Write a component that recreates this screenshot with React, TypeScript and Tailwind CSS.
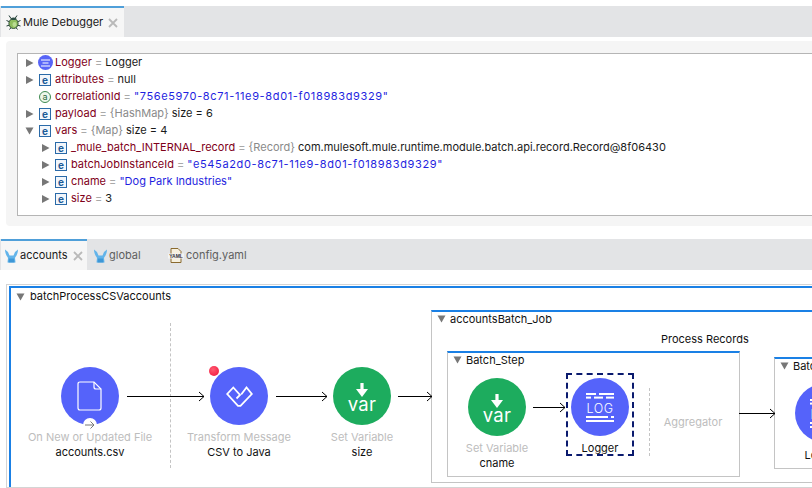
import React from "react";

const font = "font-['Inter','Liberation_Sans',sans-serif]";

function Tri({ open }: { open?: boolean }) {
  return (
    <svg width="9" height="10" viewBox="0 0 9 10" className="shrink-0">
      {open ? <path d="M0.5 1.5H8.5L4.5 8.5Z" fill="#777" /> : <path d="M1 1L8.5 5L1 9Z" fill="#777" />}
    </svg>
  );
}

function E() {
  return (
    <span className="flex h-[12px] w-[12px] shrink-0 items-center justify-center border border-[#2a6aa8] bg-[#f2f6fb] text-[10px] font-bold leading-none text-[#1c5a96]">
      e
    </span>
  );
}

function Row({ indent, tri, icon, name, children }: { indent: number; tri?: "open" | "closed"; icon: React.ReactNode; name: string; children: React.ReactNode }) {
  return (
    <div className="flex h-[17px] items-center" style={{ paddingLeft: indent }}>
      <span className="flex w-[12px] shrink-0 items-center">{tri && <Tri open={tri === "open"} />}</span>
      <span className="flex w-[16px] shrink-0 items-center justify-center">{icon}</span>
      <span className="ml-[2px] whitespace-pre text-[#7f0019]">{name}</span>
      <span className="whitespace-pre text-[#a9a9a9]"> = </span>
      {children}
    </div>
  );
}

const Blue = ({ children }: { children: React.ReactNode }) => <span className="whitespace-pre text-[#1f1fe0]">{children}</span>;
const Uuid = ({ children }: { children: React.ReactNode }) => <span className="whitespace-pre tracking-[0.64px] text-[#1f1fe0]">{children}</span>;
const Gray = ({ children }: { children: React.ReactNode }) => <span className="whitespace-pre text-[#8a8a8a]">{children}</span>;
const Dark = ({ children }: { children: React.ReactNode }) => <span className="whitespace-pre text-[#1a1a1a]">{children}</span>;

function Close() {
  return (
    <svg width="10" height="10" viewBox="0 0 10 10" className="ml-[5px] shrink-0">
      <path d="M1 1L9 9M9 1L1 9" stroke="#b9b9b9" strokeWidth="1.8" />
    </svg>
  );
}

function Bug() {
  return (
    <svg width="15" height="15" viewBox="0 0 15 15" className="shrink-0">
      <path d="M3 0.5L5 3.5M11 0.5L9 3.5M0.5 5.5L4 7M14.5 5.5L11 7M0.5 11L4 10M14.5 11L11 10M3.5 14.5L5.5 12M11.5 14.5L9.5 12" stroke="#1f3a34" strokeWidth="1" />
      <ellipse cx="7.5" cy="8.5" rx="4.6" ry="5" fill="#8fbe5e" stroke="#34543c" strokeWidth="1" />
      <ellipse cx="8.5" cy="9.5" rx="2" ry="2.4" fill="#b9dc92" />
      <path d="M4.5 3.5Q7.5 1.5 10.5 3.5L9.5 5H5.5Z" fill="#2f4f45" />
    </svg>
  );
}

function Mule() {
  return (
    <svg width="13" height="14" viewBox="0 0 13 14" className="shrink-0">
      <path d="M0 0.5C0 5 2 7 3 9L2.5 13.5H10.5L10 9C11 7 13 5 13 0.5L10 3L8.5 6.5H4.5L3 3Z" fill="#62b4ea" />
      <path d="M4 9.5H9L9.5 13.5H3.5Z" fill="#3f97d6" />
    </svg>
  );
}

function Tab({ active, w, pl, icon, label, close }: { active?: boolean; w: string; pl: string; icon: React.ReactNode; label: string; close?: boolean }) {
  return (
    <div className={`${w} ${pl} flex h-full items-center ${active ? "border-t-2 border-[#4f9fd9] bg-[#f6f6f6] text-[#1a1a1a]" : "pt-[2px] text-[#5f5f5f]"} text-[11px]`}>
      {icon}
      <span className="ml-[2px] whitespace-pre">{label}</span>
      {close && <Close />}
    </div>
  );
}

function Node({ x, y, color, children }: { x: number; y: number; color: string; children: React.ReactNode }) {
  return (
    <div className="absolute flex h-[58px] w-[58px] items-center justify-center rounded-full" style={{ left: x - 29, top: y - 29, backgroundColor: color }}>
      {children}
    </div>
  );
}

function Label({ x, y, muted, children }: { x: number; y: number; muted?: boolean; children: React.ReactNode }) {
  return (
    <div className={`absolute -translate-x-1/2 whitespace-nowrap text-[11px] leading-[14px] ${muted ? "text-[#bdbdbd]" : "text-[#111]"}`} style={{ left: x, top: y - 7 }}>
      {children}
    </div>
  );
}

function Box({ x, y, w, h, title }: { x: number; y: number; w: number; h: number; title: string }) {
  return (
    <div className="absolute border border-t-2 border-[#c4c4c4] border-t-[#1a80e5] bg-white" style={{ left: x, top: y, width: w, height: h }}>
      <div className="flex h-[14px] items-center pl-[5px] text-[11px] leading-[14px] text-[#111]">
        <svg width="9" height="8" viewBox="0 0 9 8" className="mr-[4px] shrink-0">
          <path d="M0.5 0.5H8.5L4.5 7.5Z" fill="#777" />
        </svg>
        {title}
      </div>
    </div>
  );
}

function VarIcon() {
  return (
    <svg width="40" height="46" viewBox="0 0 40 46" className="mt-[1px]">
      <path d="M18.4 9H21.6V15H26L20 23L14 15H18.4Z" fill="#fff" />
      <text x="20" y="37" textAnchor="middle" fill="#fff" fontSize="18.5" fontWeight="400" letterSpacing=".3" fontFamily="Inter, sans-serif">var</text>
    </svg>
  );
}

function LogIcon() {
  return (
    <svg width="28" height="29" viewBox="0 0 28 29" fill="#fff">
      <rect x="0" y="0" width="10" height="2" /><rect x="13" y="0" width="15" height="2" />
      <rect x="0" y="3.6" width="5" height="2" /><rect x="8" y="3.6" width="9" height="2" /><rect x="20" y="3.6" width="8" height="2" />
      <text x="14" y="19.5" textAnchor="middle" fontSize="12.5" fontWeight="300" letterSpacing=".5" fontFamily="Inter, sans-serif">LOG</text>
      <rect x="0" y="23" width="22" height="2" /><rect x="25" y="23" width="3" height="2" />
      <rect x="0" y="27" width="28" height="2" />
    </svg>
  );
}

function Arrow({ x1, x2, y }: { x1: number; x2: number; y: number }) {
  return (
    <g fill="none" stroke="#000" strokeWidth="1">
      <path d={`M${x1} ${y}.5H${x2}`} />
      <path d={`M${x2 - 5} ${y - 4}L${x2} ${y}.5L${x2 - 5} ${y + 5}`} />
    </g>
  );
}

export default function App() {
  return (
    <div className={`${font} h-[488px] w-[812px] overflow-hidden bg-white text-[11px]`}>
      <div className="h-[6px]" />
      <div className="flex h-[31px] bg-[#e3e4e6]">
        <div className="ml-[1px] flex">
          <Tab active w="w-[123px]" pl="pl-[5px]" icon={<Bug />} label="Mule Debugger" close />
        </div>
      </div>
      <div className="h-[195px] bg-white pl-[6px] pt-[4px]">
        <div className="h-[185px] rounded-l-[4px] bg-[#f5f5f5] pl-[11px] pt-[12px]">
          <div className="h-[163px] border-y border-l border-[#b5b5b5] bg-white text-[11px]">
            <div className="pl-[7px]">
              <Row indent={0} tri="closed" name="Logger" icon={
                <span className="flex h-[15px] w-[15px] items-center justify-center rounded-full bg-[#5865f7]">
                  <svg width="9" height="8" viewBox="0 0 9 8" stroke="#fff" strokeWidth="1.2"><path d="M0 1H9M1.5 4H7.5M0 7H9" /></svg>
                </span>
              }><Dark>Logger</Dark></Row>
              <Row indent={0} tri="closed" name="attributes" icon={<E />}><Dark>null</Dark></Row>
              <Row indent={0} name="correlationId" icon={
                <span className="flex h-[12px] w-[12px] items-center justify-center rounded-full border border-[#3e8a50] bg-[#eef7ec] text-[9px] leading-none text-[#2c6b3b]">a</span>
              }><Uuid>"756e5970-8c71-11e9-8d01-f018983d9329"</Uuid></Row>
              <Row indent={0} tri="closed" name="payload" icon={<E />}><Gray>{"{HashMap}"}</Gray><Dark> size = 6</Dark></Row>
              <Row indent={0} tri="open" name="vars" icon={<E />}><Gray>{"{Map}"}</Gray><Dark> size = 4</Dark></Row>
              <Row indent={16} tri="closed" name="_mule_batch_INTERNAL_record" icon={<E />}><Gray>{"{Record}"}</Gray><Dark> com.mulesoft.mule.runtime.module.batch.api.record.Record@8f06430</Dark></Row>
              <Row indent={16} tri="closed" name="batchJobInstanceId" icon={<E />}><Uuid>"e545a2d0-8c71-11e9-8d01-f018983d9329"</Uuid></Row>
              <Row indent={16} tri="closed" name="cname" icon={<E />}><Blue>"Dog Park Industries"</Blue></Row>
              <Row indent={16} tri="closed" name="size" icon={<E />}><Dark>3</Dark></Row>
            </div>
          </div>
        </div>
      </div>
      <div className="h-[7px]" />
      <div className="flex h-[31px] bg-[#e3e4e6]">
        <div className="ml-[1px] flex h-full">
          <Tab active w="w-[86px]" pl="pl-[4px]" icon={<Mule />} label="accounts" close />
          <Tab w="w-[75px]" pl="pl-[7px]" icon={<Mule />} label="global" />
          <Tab w="w-[120px]" pl="pl-[6px]" icon={
            <svg width="16" height="15" viewBox="0 0 16 15" className="shrink-0">
              <path d="M3 .5H10L13 3.5V14.5H3Z" fill="#f6f0df" stroke="#8a6a2f" />
              <rect x="0" y="5.5" width="16" height="5" fill="#f3f3f3" />
              <text x="8" y="9.8" textAnchor="middle" fontSize="5" fontWeight="700" fill="#333" fontFamily="Liberation Sans, sans-serif">YAML</text>
            </svg>
          } label="config.yaml" />
        </div>
      </div>
      <div className="relative h-[218px] overflow-hidden bg-white">
        <div className="absolute left-[6px] top-[14px] h-[204px] w-[820px] border border-[#d4d4d4] pl-[2px] pt-[1px]">
          <div className="h-full border-l-2 border-t-2 border-[#1a80e5]">
            <div className="flex h-[17px] items-center pl-[5px] text-[11px] text-[#111]">
              <svg width="9" height="8" viewBox="0 0 9 8" className="mr-[5px] shrink-0">
                <path d="M0.5 0.5H8.5L4.5 7.5Z" fill="#777" />
              </svg>
              batchProcessCSVaccounts
            </div>
          </div>
        </div>
        <div className="absolute left-0 top-[-270px] h-[488px] w-[812px]">
          <div className="absolute left-[170px] top-[323px] h-[145px] border-l border-dashed border-[#c4c4c4]" />
          <Box x={431} y={310} w={400} h={173} title="accountsBatch_Job" />
          <Box x={447} y={351} w={293} h={126} title="Batch_Step" />
          <Box x={774} y={357} w={60} h={112} title="Batch_Step" />
          <svg className="absolute left-0 top-0" width="812" height="488">
            <Arrow x1={127} x2={204} y={396} />
            <Arrow x1={276} x2={327} y={396} />
            <Arrow x1={398} x2={432} y={396} />
            <Arrow x1={533} x2={565} y={407} />
            <Arrow x1={739} x2={775} y={413} />
          </svg>
          <Node x={90} y={396} color="#5563fa">
            <svg width="26" height="32" viewBox="0 0 26 32" fill="none" stroke="#fff" strokeWidth="1.2">
              <path d="M3 2H17L24 9V28Q24 30 22 30H3Q1 30 1 28V4Q1 2 3 2Z" />
              <path d="M17 2V7Q17 9 19 9H24" />
            </svg>
          </Node>
          <div className="absolute left-[83px] top-[418px] flex h-[14px] w-[14px] items-center justify-center rounded-full bg-white">
            <svg width="10" height="8" viewBox="0 0 10 8" fill="none" stroke="#777" strokeWidth="1"><path d="M0 4H9M5.5 .5L9 4L5.5 7.5" /></svg>
          </div>
          <Label x={90} y={437} muted>On New or Updated File</Label>
          <Label x={90} y={452}>accounts.csv</Label>

          <Node x={239} y={396} color="#5563fa">
            <svg width="27" height="21" viewBox="0 0 27 21" fill="none" stroke="#fff" strokeWidth="1.8">
              <path d="M10.5 12.5L14 9L7.3 1.5L1.2 8L12 19.8H14.5L25.8 8L20.5 1.5L15.2 8.5" />
            </svg>
          </Node>
          <div className="absolute left-[209px] top-[366px] h-[10px] w-[10px] rounded-full bg-[radial-gradient(circle_at_40%_35%,#ff5a70,#f0103a)]" />
          <Label x={239} y={437} muted>Transform Message</Label>
          <Label x={239} y={452}>CSV to Java</Label>

          <Node x={362} y={396} color="#1dac5e"><VarIcon /></Node>
          <Label x={362} y={437} muted>Set Variable</Label>
          <Label x={362} y={452}>size</Label>

          <div className="absolute left-[661px] top-[332px] text-[11px] leading-[14px] text-[#111]">Process Records</div>

          <Node x={497} y={407} color="#1dac5e"><VarIcon /></Node>
          <Label x={497} y={448} muted>Set Variable</Label>
          <Label x={497} y={463}>cname</Label>

          <div className="absolute left-[566px] top-[373px] h-[83px] w-[68px] border-2 border-dashed border-[#0a1a6e]" />
          <Node x={600} y={407} color="#5563fa"><LogIcon /></Node>
          <Label x={600} y={448}>Logger</Label>

          <div className="absolute left-[649px] top-[388px] h-[68px] border-l border-dashed border-[#c4c4c4]" />
          <Label x={693} y={422} muted>Aggregator</Label>

          <Node x={824} y={413} color="#5563fa"><LogIcon /></Node>
          <Label x={823} y={455}>Logger</Label>
        </div>
      </div>
    </div>
  );
}
